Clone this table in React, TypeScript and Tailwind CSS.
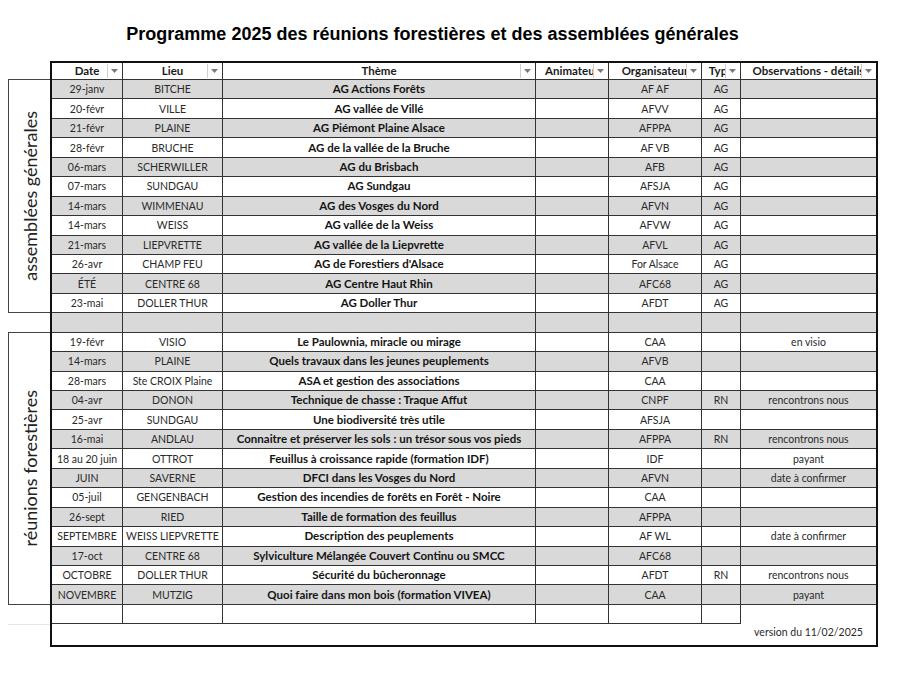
import React from "react";

type R = { d: string; l: string; t: string; o: string; ty: string; obs: string };

const ROWS: R[] = [
  { d: "29-janv", l: "BITCHE", t: "AG Actions Forêts", o: "AF AF", ty: "AG", obs: "" },
  { d: "20-févr", l: "VILLE", t: "AG vallée de Villé", o: "AFVV", ty: "AG", obs: "" },
  { d: "21-févr", l: "PLAINE", t: "AG Piémont Plaine Alsace", o: "AFPPA", ty: "AG", obs: "" },
  { d: "28-févr", l: "BRUCHE", t: "AG de la vallée de la Bruche", o: "AF VB", ty: "AG", obs: "" },
  { d: "06-mars", l: "SCHERWILLER", t: "AG du Brisbach", o: "AFB", ty: "AG", obs: "" },
  { d: "07-mars", l: "SUNDGAU", t: "AG Sundgau", o: "AFSJA", ty: "AG", obs: "" },
  { d: "14-mars", l: "WIMMENAU", t: "AG des Vosges du Nord", o: "AFVN", ty: "AG", obs: "" },
  { d: "14-mars", l: "WEISS", t: "AG vallée de la Weiss", o: "AFVW", ty: "AG", obs: "" },
  { d: "21-mars", l: "LIEPVRETTE", t: "AG vallée de la Liepvrette", o: "AFVL", ty: "AG", obs: "" },
  { d: "26-avr", l: "CHAMP FEU", t: "AG de Forestiers d'Alsace", o: "For Alsace", ty: "AG", obs: "" },
  { d: "ÉTÉ", l: "CENTRE 68", t: "AG Centre Haut Rhin", o: "AFC68", ty: "AG", obs: "" },
  { d: "23-mai", l: "DOLLER THUR", t: "AG Doller Thur", o: "AFDT", ty: "AG", obs: "" },
  { d: "", l: "", t: "", o: "", ty: "", obs: "" },
  { d: "19-févr", l: "VISIO", t: "Le Paulownia, miracle ou mirage", o: "CAA", ty: "", obs: "en visio" },
  { d: "14-mars", l: "PLAINE", t: "Quels travaux dans les jeunes peuplements", o: "AFVB", ty: "", obs: "" },
  { d: "28-mars", l: "Ste CROIX Plaine", t: "ASA et gestion des associations", o: "CAA", ty: "", obs: "" },
  { d: "04-avr", l: "DONON", t: "Technique de chasse : Traque Affut", o: "CNPF", ty: "RN", obs: "rencontrons nous" },
  { d: "25-avr", l: "SUNDGAU", t: "Une biodiversité très utile", o: "AFSJA", ty: "", obs: "" },
  { d: "16-mai", l: "ANDLAU", t: "Connaitre et préserver les sols : un trésor sous vos pieds", o: "AFPPA", ty: "RN", obs: "rencontrons nous" },
  { d: "18 au 20 juin", l: "OTTROT", t: "Feuillus à croissance rapide (formation IDF)", o: "IDF", ty: "", obs: "payant" },
  { d: "JUIN", l: "SAVERNE", t: "DFCI dans les Vosges du Nord", o: "AFVN", ty: "", obs: "date à confirmer" },
  { d: "05-juil", l: "GENGENBACH", t: "Gestion des incendies de forêts en Forêt - Noire", o: "CAA", ty: "", obs: "" },
  { d: "26-sept", l: "RIED", t: "Taille de formation des feuillus", o: "AFPPA", ty: "", obs: "" },
  { d: "SEPTEMBRE", l: "WEISS LIEPVRETTE", t: "Description des peuplements", o: "AF WL", ty: "", obs: "date à confirmer" },
  { d: "17-oct", l: "CENTRE 68", t: "Sylviculture Mélangée Couvert Continu ou SMCC", o: "AFC68", ty: "", obs: "" },
  { d: "OCTOBRE", l: "DOLLER THUR", t: "Sécurité du bûcheronnage", o: "AFDT", ty: "RN", obs: "rencontrons nous" },
  { d: "NOVEMBRE", l: "MUTZIG", t: "Quoi faire dans mon bois (formation VIVEA)", o: "CAA", ty: "", obs: "payant" },
];

const cellBase =
  "flex items-center justify-center overflow-hidden whitespace-nowrap border-b border-[#333]";

function FilterBtn() {
  return (
    <div className="absolute right-[2px] top-[1px] bottom-[1px] w-[13px] bg-white border-l border-[#cfcfcf] flex items-center justify-center">
      <svg width="7" height="4" viewBox="0 0 7 4">
        <polygon points="0,0 7,0 3.5,4" fill="#7a7a7a" />
      </svg>
    </div>
  );
}

function HeadCell({ w, label, last }: { w: string; label: string; last?: boolean }) {
  return (
    <div className={`${w} ${cellBase} relative ${last ? "" : "border-r"} font-bold text-[11.5px] text-[#1a1a1a]`}>
      <span>{label}</span>
      <FilterBtn />
    </div>
  );
}

function Row({ r, i }: { r: R; i: number }) {
  const bg = i % 2 === 0 ? "bg-[#d9d9d9]" : "bg-white";
  return (
    <div className={`flex h-[19.45px] ${bg} text-[#2a2a2a] text-[10.5px]`}>
      <div className={`w-[71px] ${cellBase} border-r`}>{r.d}</div>
      <div className={`w-[100px] ${cellBase} border-r`}>{r.l}</div>
      <div className={`w-[313px] ${cellBase} border-r font-bold text-[11.5px] text-[#141414]`}>{r.t}</div>
      <div className={`w-[73px] ${cellBase} border-r`}></div>
      <div className={`w-[93px] ${cellBase} border-r`}>{r.o}</div>
      <div className={`w-[39px] ${cellBase} border-r`}>{r.ty}</div>
      <div className={`w-[135px] ${cellBase}`}>{r.obs}</div>
    </div>
  );
}

export default function App() {
  return (
    <div className="w-[900px] h-[675px] bg-white overflow-hidden [font-family:Lato,'Open_Sans',sans-serif]">
      <div className="h-[61px] pt-[24px] pr-[35px] text-center">
        <h1 className="text-[18px] leading-[20px] font-bold text-black [font-family:'Liberation_Sans',Arial,sans-serif]">
          Programme 2025 des réunions forestières et des assemblées générales
        </h1>
      </div>
      <div className="flex pl-[8px]">
        <div className="w-[42px] flex flex-col text-[#222]">
          <div className="h-[18px]" />
          <div className="h-[234.4px] border border-r-0 border-[#444] flex items-center justify-center">
            <span className="[writing-mode:vertical-rl] rotate-180 text-[18px] leading-[22px] whitespace-nowrap">
              assemblées générales
            </span>
          </div>
          <div className="h-[18.45px]" />
          <div className="h-[273.3px] border border-r-0 border-[#444] flex items-center justify-center">
            <span className="[writing-mode:vertical-rl] rotate-180 text-[18px] leading-[22px] whitespace-nowrap">
              réunions forestières
            </span>
          </div>
          <div className="h-[18.5px]" />
          <div className="border-t border-[#e6e6e6]" />
        </div>
        <div className="w-[828px] border-2 border-[#111] leading-[14px]">
          <div className="flex h-[17px] bg-white">
            <HeadCell w="w-[71px]" label="Date" />
            <HeadCell w="w-[100px]" label="Lieu" />
            <HeadCell w="w-[313px]" label="Thème" />
            <HeadCell w="w-[73px]" label="Animateur" />
            <HeadCell w="w-[93px]" label="Organisateur" />
            <HeadCell w="w-[39px]" label="Type" />
            <HeadCell w="w-[135px]" label="Observations - détails" last />
          </div>
          {ROWS.map((r, i) => (
            <Row key={i} r={r} i={i} />
          ))}
          <div className="flex">
            <div className="w-[689px] flex flex-col">
              <div className="flex h-[19.45px] bg-white">
                <div className={`w-[71px] ${cellBase} border-r`}></div>
                <div className={`w-[100px] ${cellBase} border-r`}></div>
                <div className={`w-[313px] ${cellBase} border-r`}></div>
                <div className={`w-[73px] ${cellBase} border-r`}></div>
                <div className={`w-[93px] ${cellBase} border-r`}></div>
                <div className={`w-[39px] ${cellBase} border-r`}></div>
              </div>
              <div className="h-[20.4px]" />
            </div>
            <div className="w-[135px] flex items-end justify-center pb-[6px] text-[10.5px] leading-[14px] text-[#2a2a2a]">
              version du 11/02/2025
            </div>
          </div>
        </div>
      </div>
    </div>
  );
}
